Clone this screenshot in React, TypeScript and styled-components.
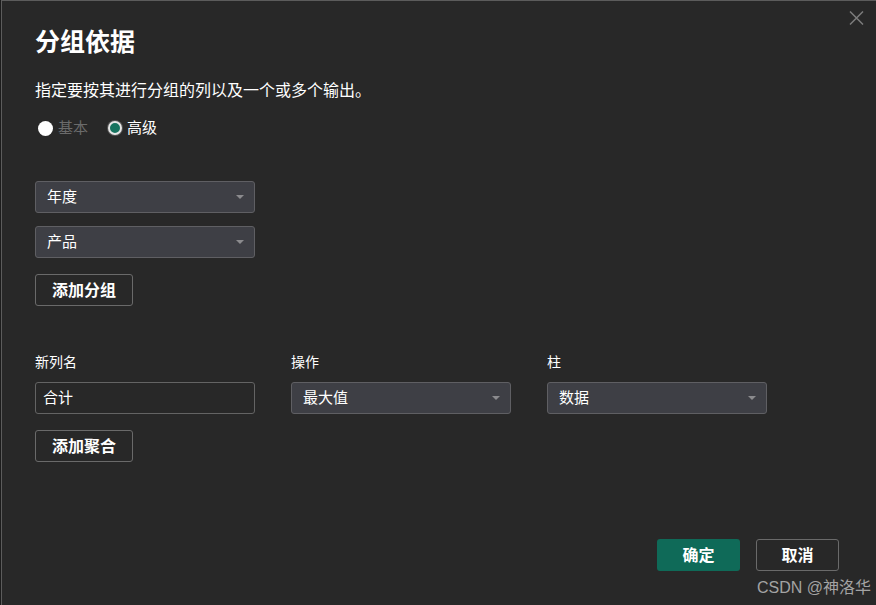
import React from "react";
import styled, { createGlobalStyle } from "styled-components";

const Global = createGlobalStyle`
  html, body { margin: 0; padding: 0; background: #1c1c1c; }
  body { font-family: "Noto Sans CJK SC", "Noto Sans", sans-serif; }
  * { box-sizing: border-box; }
`;

const Dialog = styled.div`
  position: relative;
  margin-left: 1px;
  height: 605px;
  background: #282828;
  border-top: 1px solid #5c5c5c;
  border-left: 1px solid #5c5c5c;
  padding: 23px 37px 34px 33px;
  display: flex;
  flex-direction: column;
  color: #fff;
`;

const Close = styled.button`
  position: absolute;
  top: 9px;
  right: 11px;
  width: 17px;
  height: 16px;
  padding: 0;
  border: 0;
  background: transparent;
  display: flex;
  align-items: center;
  justify-content: center;
`;

const Title = styled.h1`
  margin: 0;
  font-size: 25px;
  line-height: 32px;
  font-weight: 700;
  color: #fff;
`;

const Desc = styled.p`
  margin: 21px 0 0;
  font-size: 16px;
  line-height: 24px;
  color: #fff;
`;

const RadioRow = styled.div`
  margin-top: 14px;
  display: flex;
  align-items: center;
  gap: 17px;
  height: 24px;
`;

const RadioLabel = styled.label<{ $disabled?: boolean }>`
  display: flex;
  align-items: center;
  gap: 5px;
  font-size: 15px;
  line-height: 24px;
  color: ${(p) => (p.$disabled ? "#6b6b6b" : "#fff")};
`;

const RadioDot = styled.span<{ $checked?: boolean }>`
  flex-shrink: 0;
  width: ${(p) => (p.$checked ? 14 : 15)}px;
  height: ${(p) => (p.$checked ? 14 : 15)}px;
  border-radius: 50%;
  margin-left: 3px;
  margin-top: 2px;
  background: ${(p) => (p.$checked ? "#17735f" : "#fff")};
  border: ${(p) => (p.$checked ? "2px solid #e6e6e6" : "0")};
  box-shadow: ${(p) => (p.$checked ? "0 0 0 1px #555" : "none")};
`;

const GroupList = styled.div`
  margin-top: 42px;
  display: flex;
  flex-direction: column;
  gap: 13px;
  width: 220px;
`;

const Select = styled.div<{ $w?: number }>`
  width: ${(p) => p.$w ?? 220}px;
  height: 32px;
  background: #3e3f45;
  border: 1px solid #5f5f63;
  border-radius: 3px;
  display: flex;
  align-items: center;
  justify-content: space-between;
  padding: 0 10px 3px 11px;
  font-size: 15px;
  color: #fff;
`;

const Arrow = styled.span`
  width: 0;
  height: 0;
  margin-top: 3px;
  border-left: 4px solid transparent;
  border-right: 4px solid transparent;
  border-top: 4px solid #8b8b8e;
`;

const Input = styled.div`
  width: 220px;
  height: 32px;
  background: #282828;
  border: 1px solid #646464;
  border-radius: 3px;
  display: flex;
  align-items: center;
  padding: 0 7px 3px;
  font-size: 15px;
  color: #fff;
`;

const OutlineButton = styled.button<{ $mt: number; $w?: number }>`
  margin-top: ${(p) => p.$mt}px;
  width: ${(p) => p.$w ?? 98}px;
  height: 32px;
  background: #282828;
  border: 1px solid #6a6a6a;
  border-radius: 3px;
  color: #fff;
  font-family: inherit;
  font-size: 16px;
  font-weight: 700;
  padding: 0 0 3px;
  align-self: flex-start;
`;

const AggRow = styled.div`
  margin-top: 47px;
  display: grid;
  grid-template-columns: repeat(3, 220px);
  column-gap: 36px;
`;

const Field = styled.div`
  display: flex;
  flex-direction: column;
  gap: 9px;
`;

const FieldLabel = styled.div`
  font-size: 14px;
  line-height: 20px;
  padding-bottom: 2px;
  margin-top: -2px;
  color: #fff;
`;

const Footer = styled.div`
  margin-top: auto;
  display: flex;
  justify-content: flex-end;
  gap: 16px;
`;

const PrimaryButton = styled.button`
  width: 83px;
  height: 32px;
  background: #0f6a58;
  border: 0;
  border-radius: 3px;
  color: #fff;
  font-family: inherit;
  font-size: 16px;
  font-weight: 700;
  padding: 0 0 3px;
`;

const Watermark = styled.div`
  position: absolute;
  right: 5px;
  bottom: 7px;
  font-family: "Liberation Sans", "Noto Sans CJK SC", sans-serif;
  font-size: 16px;
  line-height: 20px;
  color: #a3a3a3;
`;

export default function App() {
  return (
    <>
      <Global />
      <Dialog>
        <Close aria-label="关闭">
          <svg width="15" height="14" viewBox="0 0 15 14">
            <path d="M1 0.5 L14 13.5 M14 0.5 L1 13.5" stroke="#7c7c7c" strokeWidth="1.5" />
          </svg>
        </Close>
        <Title>分组依据</Title>
        <Desc>指定要按其进行分组的列以及一个或多个输出。</Desc>
        <RadioRow>
          <RadioLabel $disabled>
            <RadioDot />
            基本
          </RadioLabel>
          <RadioLabel>
            <RadioDot $checked />
            高级
          </RadioLabel>
        </RadioRow>
        <GroupList>
          <Select>
            年度
            <Arrow />
          </Select>
          <Select>
            产品
            <Arrow />
          </Select>
        </GroupList>
        <OutlineButton $mt={16}>添加分组</OutlineButton>
        <AggRow>
          <Field>
            <FieldLabel>新列名</FieldLabel>
            <Input>合计</Input>
          </Field>
          <Field>
            <FieldLabel>操作</FieldLabel>
            <Select>
              最大值
              <Arrow />
            </Select>
          </Field>
          <Field>
            <FieldLabel>柱</FieldLabel>
            <Select>
              数据
              <Arrow />
            </Select>
          </Field>
        </AggRow>
        <OutlineButton $mt={16}>添加聚合</OutlineButton>
        <Footer>
          <PrimaryButton>确定</PrimaryButton>
          <OutlineButton $mt={0} $w={83}>取消</OutlineButton>
        </Footer>
        <Watermark>CSDN @神洛华</Watermark>
      </Dialog>
    </>
  );
}
